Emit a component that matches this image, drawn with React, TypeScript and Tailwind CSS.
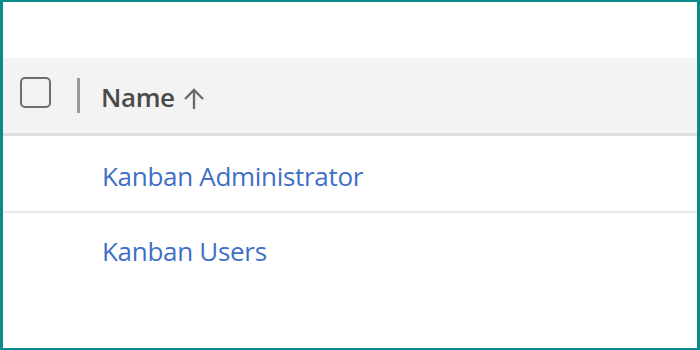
export default function App() {
  const rows = ["Kanban Administrator", "Kanban Users"];

  return (
    <div
      className="w-[700px] h-[350px] bg-white border-y-2 border-x-[3px] border-[#0b8a8c] pt-[56px] overflow-hidden"
      style={{ fontFamily: '"Open Sans", "Noto Sans", sans-serif' }}
    >
      <div className="h-[78px] bg-[#f3f3f3] border-b-[3px] border-[#e0e0e0] flex items-center pl-[17px]">
        <div className="w-[31px] h-[31px] mb-[7px] rounded-[5px] border-[2.5px] border-[#6e6e6e] bg-[#f3f3f3]" />
        <div className="ml-[26px] w-[3px] h-[35px] bg-[#9a9a9a]" />
        <div className="ml-[21px] flex items-center text-[#4a4a4a] text-[26px] font-semibold tracking-[-0.4px] mt-[3px]">
          Name
          <svg className="ml-[8px] mt-[3px]" width="22" height="21" viewBox="0 0 22 21" fill="none">
            <path d="M11 21V2M2 11l9-9 9 9" stroke="#6a6a6a" strokeWidth="2.3" />
          </svg>
        </div>
      </div>
      {rows.map((r, i) => (
        <div
          key={r}
          className={`h-[77px] flex items-center pl-[99px] text-[26px] text-[#3f6fc6] tracking-[-0.3px] ${
            i === 0 ? "border-b-2 border-[#e8e8e8] pt-[5px]" : ""
          }`}
        >
          {r}
        </div>
      ))}
    </div>
  );
}
